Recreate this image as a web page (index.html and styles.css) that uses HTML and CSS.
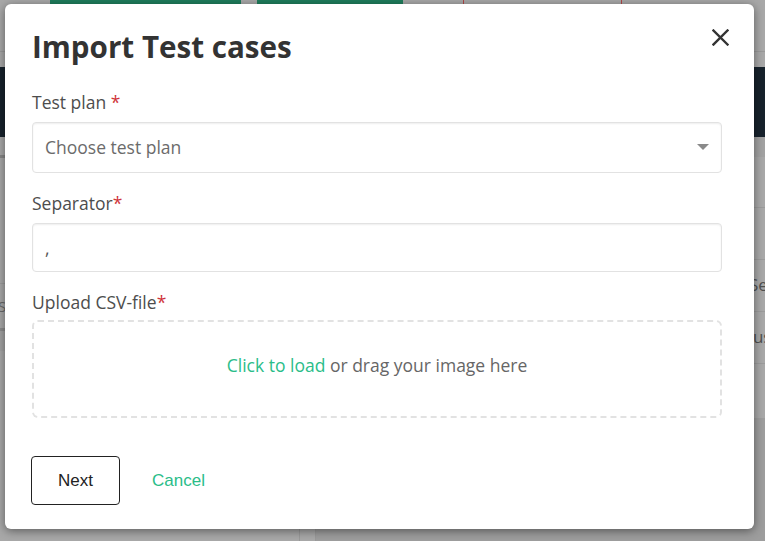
FILE: index.html
```html
<!DOCTYPE html>
<html lang="en">
<head>
    <meta charset="UTF-8">
    <meta name="viewport" content="width=device-width, initial-scale=1.0">
    <link rel="stylesheet" href="styles.css">
    <title>Import Test cases</title>
</head>
<body>

<div class="app">
    <div class="topbar">
        <span></span>
        <span class="tab-green"></span>
        <span></span>
        <span class="tab-green"></span>
        <span></span>
        <span class="tab-mark"></span>
        <span></span>
        <span class="tab-mark"></span>
    </div>
    <div class="subbar"></div>
    <div class="header"></div>
    <div class="main">
        <div class="sidebar">
            <div class="sb-head"></div>
            <div class="sb-space"></div>
            <div class="sb-search">Search</div>
            <div class="sb-list"></div>
        </div>
        <div class="gutter"></div>
        <div class="panel">
            <div class="panel-head"></div>
            <div class="row row-tall"></div>
            <div class="row"></div>
            <div class="row"><span class="cell cell-a">Severity</span></div>
            <div class="row"><span class="cell cell-b">Status</span></div>
            <div class="row row-last"></div>
            <div class="panel-foot"></div>
        </div>
    </div>
</div>

<div class="modal">
    <button class="close" aria-label="Close">
        <svg width="17" height="17" viewBox="0 0 17 17">
            <path d="M1.5 1.5 L15.5 15.5 M15.5 1.5 L1.5 15.5" stroke="#333" stroke-width="2.4" stroke-linecap="square" fill="none"/>
        </svg>
    </button>
    <h2 class="modal-title">Import Test cases</h2>

    <label class="field-label">Test plan <span class="req">*</span></label>
    <div class="select">
        <span>Choose test plan</span>
        <span class="caret"></span>
    </div>

    <label class="field-label" for="separator">Separator<span class="req">*</span></label>
    <input class="text-input" id="separator" type="text" value=",">

    <label class="field-label label-upload">Upload CSV-file<span class="req">*</span></label>
    <div class="dropzone">
        <span><a class="link" href="#">Click to load</a> or drag your image here</span>
    </div>

    <div class="actions">
        <button class="btn-next">Next</button>
        <a class="btn-cancel" href="#">Cancel</a>
    </div>
</div>

</body>
</html>
```

FILE: styles.css
```css
body {
    margin: 0;
    width: 765px;
    height: 541px;
    overflow: hidden;
    background: #a8a8a8;
    font-family: "Open Sans", "Liberation Sans", sans-serif;
}

/* dimmed app behind the dialog */
.app {
    width: 765px;
    height: 541px;
    overflow: hidden;
}

.topbar {
    display: grid;
    grid-template-columns: 50px 191px 16px 146px 60px 1px 157px 1px 1fr;
    height: 4px;
}

.tab-green {
    background: #1f7d5c;
}

.tab-mark {
    background: #b04848;
}

.subbar {
    height: 47px;
    border-bottom: 1px solid #999;
}

.header {
    margin-top: 15px;
    height: 70px;
    background: #17222c;
}

.main {
    display: grid;
    grid-template-columns: 300px 15px 1fr;
}

.sidebar {
    border-right: 1px solid #999;
}

.sb-head {
    height: 18px;
    border-bottom: 3px solid #878787;
}

.sb-space {
    height: 125px;
    border-bottom: 1px solid #9b9b9b;
}

.sb-search {
    height: 44px;
    margin-left: -2px;
    line-height: 44px;
    font-size: 15px;
    color: #6a6a6a;
    border-bottom: 3px solid #8c8c8c;
}

.sb-list {
    height: 20px;
    background: #a2a2a2;
}

.panel {
    border-left: 1px solid #999;
}

.panel-head {
    height: 20px;
    background: #a2a2a2;
}

.row {
    height: 51px;
    border-bottom: 1px solid #9b9b9b;
    line-height: 49px;
    font-size: 17px;
    color: #505050;
    white-space: nowrap;
}

.row-tall {
    height: 50px;
}

.row-last {
    height: 54px;
    border-bottom: none;
}

.cell-a {
    margin-left: 433px;
}

.cell-b {
    margin-left: 406px;
}

.panel-foot {
    height: 140px;
    background: #9d9d9d;
}

/* dialog */
.modal {
    position: absolute;
    left: 5px;
    top: 4px;
    width: 749px;
    box-sizing: border-box;
    padding: 23px 32px 24px 27px;
    background: #fff;
    border-radius: 6px;
    box-shadow: 0 2px 10px rgba(0, 0, 0, 0.45);
}

.close {
    position: absolute;
    top: 25px;
    right: 25px;
    width: 17px;
    height: 17px;
    padding: 0;
    border: none;
    background: none;
    cursor: pointer;
}

.close svg {
    display: block;
}

.modal-title {
    margin: 0 0 23px;
    font-size: 29.6px;
    line-height: 40px;
    font-weight: 700;
    color: #333;
}

.field-label {
    display: block;
    margin-bottom: 8px;
    font-size: 17.5px;
    line-height: 24px;
    color: #4d4d4d;
}

.label-upload {
    margin-bottom: 6px;
}

.req {
    color: #d0343a;
}

.select,
.text-input {
    box-sizing: border-box;
    width: 100%;
    border: 1px solid #e2e2e2;
    border-radius: 4px;
    box-shadow: inset 0 1px 2px rgba(0, 0, 0, 0.07);
    font-family: "Open Sans", sans-serif;
    font-size: 17.5px;
}

.select {
    display: flex;
    justify-content: space-between;
    align-items: center;
    height: 51px;
    padding: 0 12px 2px;
    margin-bottom: 18px;
    color: #6b6b6b;
}

.caret {
    width: 0;
    height: 0;
    border-left: 6px solid transparent;
    border-right: 6px solid transparent;
    border-top: 6px solid #8a8a8a;
}

.text-input {
    display: block;
    height: 49px;
    padding: 0 12px;
    margin: 0 0 18px;
    color: #555;
    outline: none;
}

.dropzone {
    display: flex;
    justify-content: center;
    align-items: center;
    box-sizing: border-box;
    height: 98px;
    padding-bottom: 8px;
    border: 2px dashed #e2e2e2;
    border-radius: 6px;
    font-size: 17.5px;
    color: #666;
}

.link {
    color: #2bbd89;
    text-decoration: none;
}

.actions {
    display: flex;
    align-items: center;
    gap: 32px;
    margin-top: 38px;
}

.btn-next {
    width: 89px;
    height: 49px;
    margin-left: -1px;
    border: 1px solid #222;
    border-radius: 4px;
    background: #fff;
    font-family: "Liberation Sans", Arial, sans-serif;
    font-size: 17px;
    color: #222;
    cursor: pointer;
}

.btn-cancel {
    font-family: "Liberation Sans", Arial, sans-serif;
    font-size: 17px;
    color: #2bbd89;
    text-decoration: none;
}
```
